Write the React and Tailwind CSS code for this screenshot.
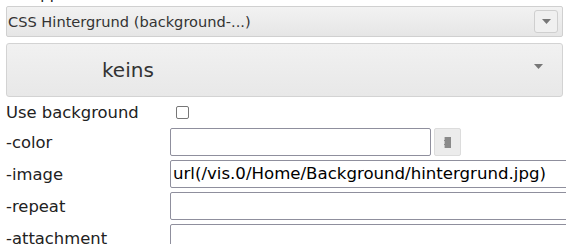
const font = { fontFamily: '"DejaVu Sans", Verdana, sans-serif' };

function Caret({ className = "" }) {
  return (
    <svg width="9" height="5" viewBox="0 0 9 5" className={className}>
      <path d="M0 0h9L4.5 5z" fill="#777" />
    </svg>
  );
}

function Row({ label, h = "h-[32px]", children }) {
  return (
    <div className={`flex items-center ${h}`}>
      <div className="w-[164px] shrink-0 pt-[3px] text-[16.4px] text-[#222]">{label}</div>
      {children}
    </div>
  );
}

export default function App() {
  return (
    <div className="w-[566px] h-[244px] overflow-hidden bg-white relative" style={font}>
      <div className="absolute left-[30px] -top-[17px] text-[15px] text-[#222]">App</div>
      <div className="pl-[6px] pt-[6px] w-[570px]">
        <div className="h-[31px] w-[557px] flex items-center border border-[#d0d0d0] rounded-[2px] bg-gradient-to-b from-[#f2f2f2] to-[#e6e6e6]">
          <span className="pl-[1px] text-[14.6px] text-[#333] flex-1">CSS Hintergrund (background-...)</span>
          <div className="w-[24px] h-[23px] mr-[4px] flex items-center justify-center border border-[#cfcfcf] rounded-[3px] bg-[#f0f0f0]">
            <Caret />
          </div>
        </div>
        <div className="mt-[6px] h-[54px] w-[557px] flex items-center border border-[#d3d3d3] rounded-[3px] bg-gradient-to-b from-[#f1f1f1] to-[#e8e8e8]">
          <span className="pl-[95px] text-[20px] text-[#333] flex-1">keins</span>
          <Caret className="mr-[19px] -mt-[8px]" />
        </div>
        <div>
          <Row label="Use background" h="h-[29px]">
            <div className="ml-[6px] mt-[1px] w-[13px] h-[13px] border-[1.5px] border-[#777] rounded-[2px] bg-white" />
          </Row>
          <Row label="-color">
            <div className="w-[261px] h-[28px] border border-[#8f8f9d] rounded-[2px]" />
            <div className="ml-[3px] w-[27px] h-[28px] flex items-center justify-center bg-[#ececec] border border-[#dcdcdc] rounded-[2px]">
              <div className="w-[7px] h-[11px] bg-[#8a8a8a] border-l border-dashed border-[#c4c4c4]" />
            </div>
          </Row>
          <Row label="-image">
            <div className="w-[400px] h-[28px] border border-[#8f8f9d] rounded-[2px] pl-[2px] text-[16.6px] text-black leading-[26px] whitespace-nowrap">
              url(/vis.0/Home/Background/hintergrund.jpg)
            </div>
          </Row>
          <Row label="-repeat">
            <div className="w-[400px] h-[28px] border border-[#8f8f9d] rounded-[2px]" />
          </Row>
          <Row label="-attachment">
            <div className="w-[400px] h-[28px] border border-[#8f8f9d] rounded-[2px]" />
          </Row>
        </div>
      </div>
    </div>
  );
}
